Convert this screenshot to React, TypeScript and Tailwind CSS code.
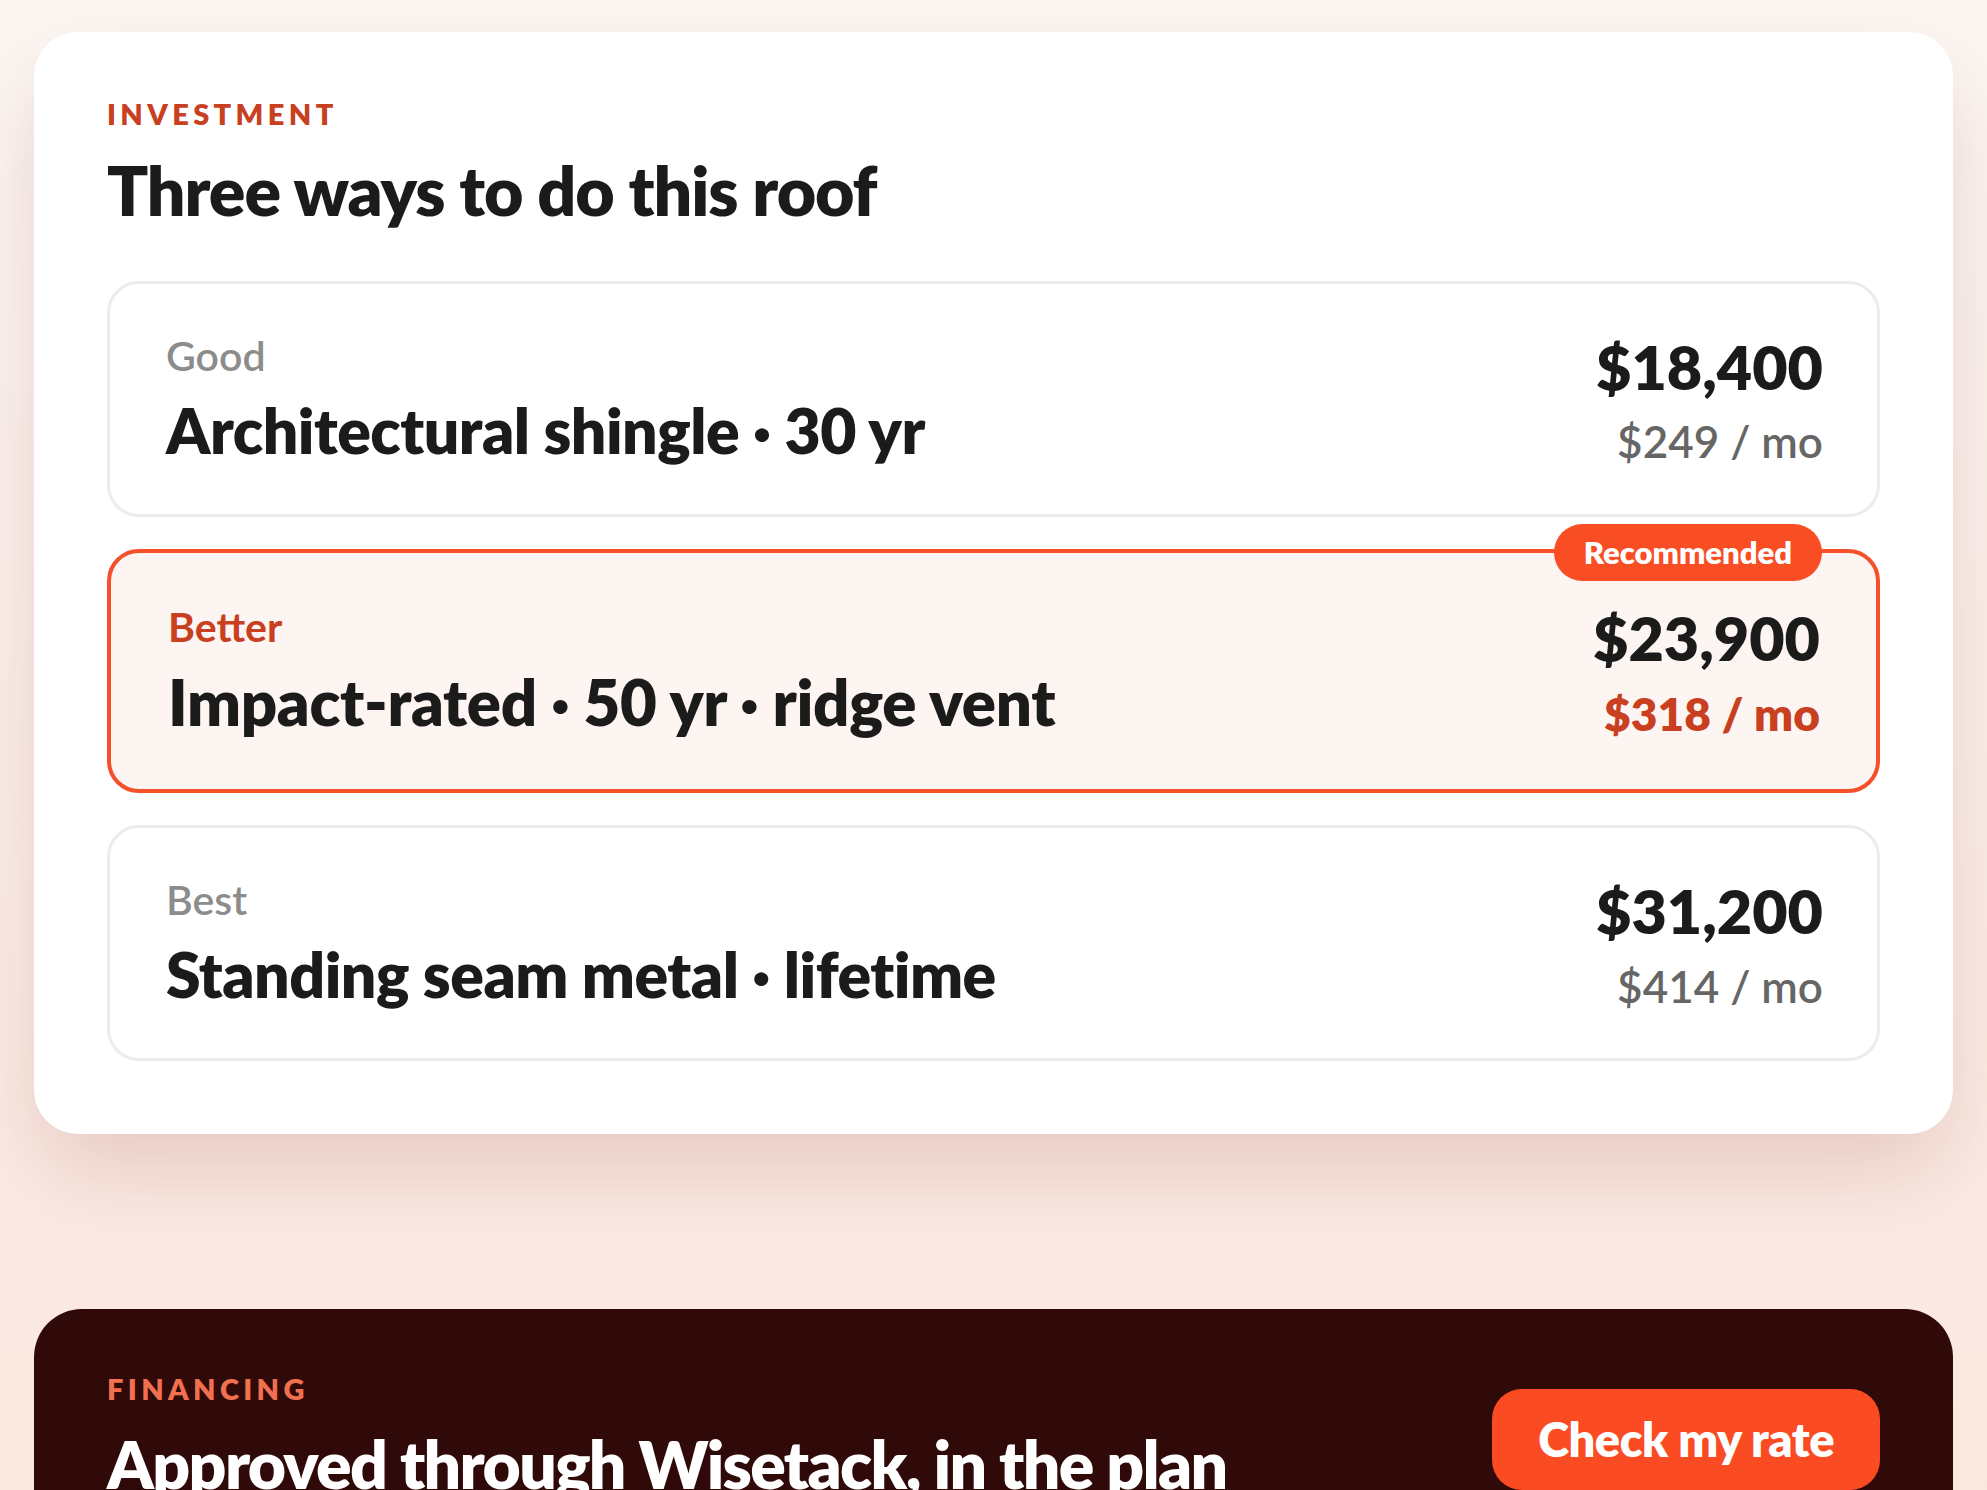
import React from "react";

type Tier = {
  tier: string;
  title: string;
  price: string;
  monthly: string;
  featured?: boolean;
};

const tiers: Tier[] = [
  { tier: "Good", title: "Architectural shingle · 30 yr", price: "$18,400", monthly: "$249 / mo" },
  { tier: "Better", title: "Impact-rated · 50 yr · ridge vent", price: "$23,900", monthly: "$318 / mo", featured: true },
  { tier: "Best", title: "Standing seam metal · lifetime", price: "$31,200", monthly: "$414 / mo" },
];

function TierCard({ t }: { t: Tier }) {
  if (t.featured) {
    return (
      <div className="relative flex items-center justify-between rounded-[32px] border-[4px] border-[#f4502a] bg-[#fdf5f2] py-[48px] pl-[57px] pr-[56px]">
        <span className="absolute right-[54px] top-[-29px] flex h-[57px] items-center rounded-full bg-[#f94d24] px-[30px] text-[31px] font-extrabold leading-[1.2] text-white">
          Recommended
        </span>
        <div className="flex flex-col gap-[12px]">
          <p className="text-[41px] font-bold leading-[1.2] text-[#c8401f]">{t.tier}</p>
          <p className="text-[63.5px] font-extrabold leading-[1.2] tracking-[-0.005em] text-[#1b1b1b]">{t.title}</p>
        </div>
        <div className="flex flex-col items-end gap-[12px]">
          <p className="text-[61px] font-extrabold leading-[1.2] text-[#1b1b1b]">{t.price}</p>
          <p className="text-[46px] font-extrabold leading-[1.2] text-[#c8401f]">{t.monthly}</p>
        </div>
      </div>
    );
  }
  return (
    <div className="flex items-center justify-between rounded-[32px] border-[3px] border-[#ececea] bg-white py-[46px] pl-[56px] pr-[54px]">
      <div className="flex flex-col gap-[12px]">
        <p className="text-[41px] font-semibold leading-[1.2] text-[#8c8c8c]">{t.tier}</p>
        <p className="text-[62.5px] font-extrabold leading-[1.2] tracking-[-0.008em] text-[#1b1b1b]">{t.title}</p>
      </div>
      <div className="flex flex-col items-end gap-[12px]">
        <p className="text-[61px] font-extrabold leading-[1.2] text-[#1b1b1b]">{t.price}</p>
        <p className="text-[44px] font-semibold leading-[1.2] text-[#666666]">{t.monthly}</p>
      </div>
    </div>
  );
}

export default function App() {
  return (
    <div
      className="min-h-screen bg-[linear-gradient(180deg,#fcf6f3_0%,#fbefea_45%,#fae5dd_100%)] px-[34px] pt-[32px] pb-[80px]"
      style={{ fontFamily: "Lato, 'Noto Sans', sans-serif" }}
    >
      {/* Investment */}
      <section className="rounded-[44px] bg-white px-[73px] pt-[65px] pb-[73px] shadow-[0_40px_90px_-10px_rgba(150,70,50,0.22)]">
        <p className="text-[29px] font-extrabold uppercase leading-[1.2] tracking-[0.15em] text-[#c8401f]">Investment</p>
        <h2 className="mt-[19px] text-[68px] font-extrabold leading-[1.15] tracking-[-0.015em] text-[#1b1b1b]">
          Three ways to do this roof
        </h2>
        <div className="mt-[52px] flex flex-col gap-[32px]">
          {tiers.map((t) => (
            <TierCard key={t.tier} t={t} />
          ))}
        </div>
      </section>

      {/* Financing */}
      <section className="mt-[175px] flex items-center justify-between rounded-[48px] bg-[#300909] px-[73px] pt-[63px] pb-[73px]">
        <div className="flex flex-col">
          <p className="text-[29px] font-extrabold uppercase leading-[1.2] tracking-[0.15em] text-[#f0704f]">Financing</p>
          <h2 className="mt-[19px] text-[66px] font-extrabold leading-[1.15] tracking-[-0.025em] text-white">
            Approved through Wisetack, in the plan
          </h2>
        </div>
        <button className="mt-[5px] rounded-[30px] bg-[#fb4b23] px-[46px] py-[22px] text-[47px] font-extrabold leading-[1.2] tracking-[-0.01em] text-white">
          Check my rate
        </button>
      </section>
    </div>
  );
}
